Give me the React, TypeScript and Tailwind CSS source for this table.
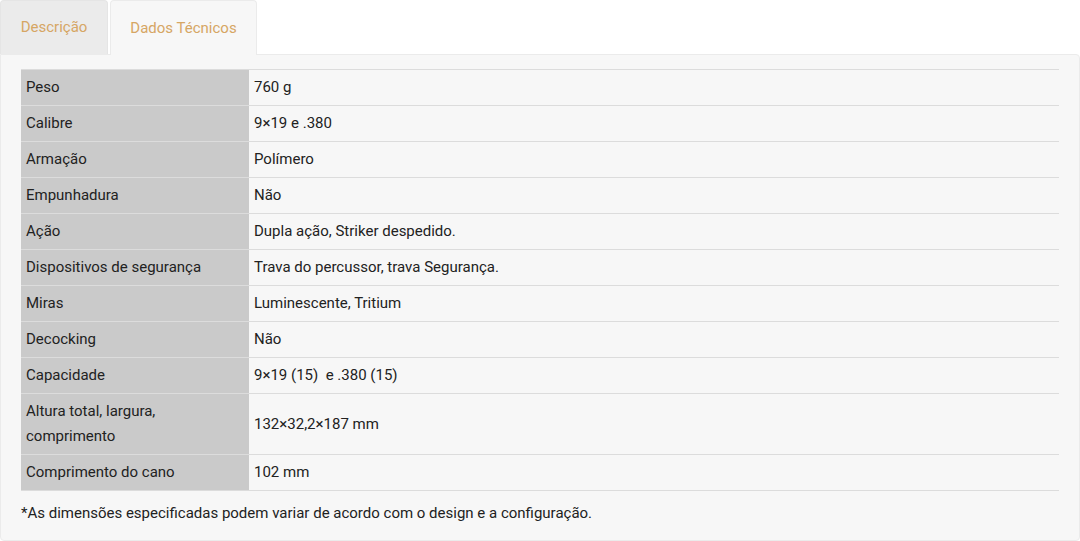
const rows: [string, string][] = [
  ['Peso', '760 g'],
  ['Calibre', '9×19 e .380'],
  ['Armação', 'Polímero'],
  ['Empunhadura', 'Não'],
  ['Ação', 'Dupla ação, Striker despedido.'],
  ['Dispositivos de segurança', 'Trava do percussor, trava Segurança.'],
  ['Miras', 'Luminescente, Tritium'],
  ['Decocking', 'Não'],
  ['Capacidade', '9×19 (15)\u00a0 e .380 (15)'],
  ['Altura total, largura, comprimento', '132×32,2×187 mm'],
  ['Comprimento do cano', '102 mm'],
];

export default function App() {
  return (
    <div className="w-[1080px] h-[541px] bg-white font-['Roboto',sans-serif] text-[15px] text-[#222]">
      <div className="flex items-end gap-[2px] h-[54px]">
        <div className="h-[54px] w-[108px] flex items-center justify-center rounded-t-[4px] bg-[#ebebeb] border border-b-0 border-[#e5e5e5] text-[15px] text-[#d6a664]">
          Descrição
        </div>
        <div className="relative z-10 -mb-px h-[55px] w-[147px] flex items-center justify-center rounded-t-[4px] bg-[#f7f7f7] border border-b-0 border-[#ebebeb] text-[15px] text-[#d6a664]">
          Dados Técnicos
        </div>
      </div>
      <div className="h-[487px] bg-[#f7f7f7] border border-[#ebebeb] rounded-b-[4px] rounded-tr-[4px] px-[20px] pt-[14px]">
        <table className="w-full border-collapse border-t border-[#dcdcdc] leading-[25px]">
          <tbody>
            {rows.map(([k, v]) => (
              <tr key={k} className="border-b border-[#dcdcdc]">
                <td className="w-[228px] bg-[#cacaca] px-[5px] py-[5px] align-middle">
                  {k === 'Altura total, largura, comprimento' ? (
                    <>
                      Altura total, largura,
                      <br />
                      comprimento
                    </>
                  ) : (
                    k
                  )}
                </td>
                <td className="px-[5px] py-[5px] align-middle whitespace-pre">{v}</td>
              </tr>
            ))}
          </tbody>
        </table>
        <p className="mt-[10px] leading-[25px]">
          *As dimensões especificadas podem variar de acordo com o design e a configuração.
        </p>
      </div>
    </div>
  );
}
